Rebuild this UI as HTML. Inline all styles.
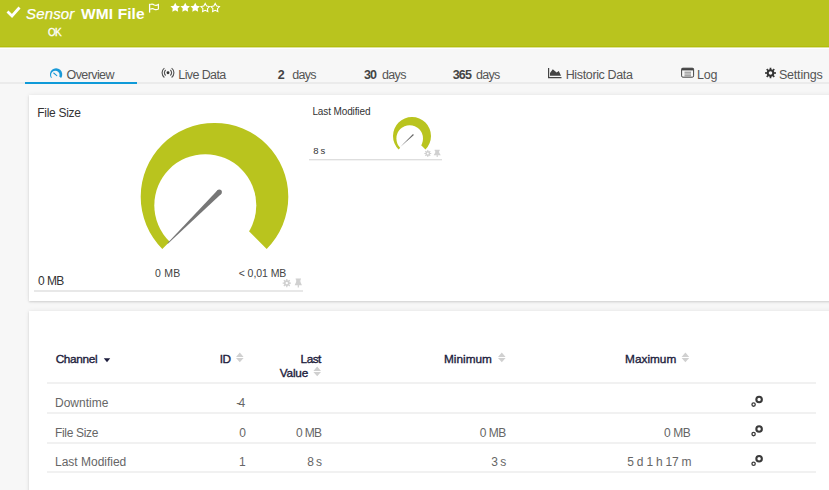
<!DOCTYPE html>
<html><head><meta charset="utf-8"><style>
html,body{margin:0;padding:0;width:829px;height:490px;overflow:hidden;background:#f7f7f7;position:relative}
.t{position:absolute;line-height:20px;font-family:"Liberation Sans",sans-serif;white-space:pre}
.a{position:absolute}
</style></head><body>
<!-- header -->
<div class="a" style="left:0;top:0;width:829px;height:46px;background:#b9c41e"></div>
<div class="a" style="left:0;top:46px;width:829px;height:1px;background:#b3bd0c"></div>
<div class="a" style="left:0;top:47px;width:829px;height:1px;background:#dde29c"></div>
<div class="a" style="left:0;top:48px;width:829px;height:1px;background:#fff"></div>
<svg class="a" style="left:0;top:0" width="829" height="48">
  <path d="M7.5 11.5 L12 16 L19.5 7.5" fill="none" stroke="#fff" stroke-width="2.8" stroke-linecap="butt"/>
  <!-- flag -->
  <path d="M149.6 3.8 V12.6" stroke="#fff" stroke-width="1.3" fill="none"/>
  <path d="M150.2 4.6 Q152.4 3.6 154.3 5 Q156.2 6 158.4 4.6 V9 Q156.2 10.3 154.3 9.2 Q152.4 8 150.2 9.2" stroke="#fff" stroke-width="1.15" fill="none"/>
  <!-- stars -->
  <g fill="#fff">
    <path d="M175.20 2.80 L176.70 5.74 L179.96 6.25 L177.63 8.59 L178.14 11.85 L175.20 10.35 L172.26 11.85 L172.77 8.59 L170.44 6.25 L173.70 5.74 Z"/>
    <path d="M185.20 2.80 L186.70 5.74 L189.96 6.25 L187.63 8.59 L188.14 11.85 L185.20 10.35 L182.26 11.85 L182.77 8.59 L180.44 6.25 L183.70 5.74 Z"/>
    <path d="M195.20 2.80 L196.70 5.74 L199.96 6.25 L197.63 8.59 L198.14 11.85 L195.20 10.35 L192.26 11.85 L192.77 8.59 L190.44 6.25 L193.70 5.74 Z"/>
  </g>
  <g fill="none" stroke="#fff" stroke-width="1.05" stroke-linejoin="miter">
    <path d="M205.20 3.40 L206.58 6.00 L209.48 6.51 L207.43 8.63 L207.85 11.54 L205.20 10.25 L202.55 11.54 L202.97 8.63 L200.92 6.51 L203.82 6.00 Z"/>
    <path d="M215.20 3.40 L216.58 6.00 L219.48 6.51 L217.43 8.63 L217.85 11.54 L215.20 10.25 L212.55 11.54 L212.97 8.63 L210.92 6.51 L213.82 6.00 Z"/>
  </g>
</svg>
<!-- tabs -->
<div class="a" style="left:0;top:82px;width:829px;height:2px;background:#ebebeb"></div>
<div class="a" style="left:25px;top:82px;width:112px;height:2px;background:#0f9ad8"></div>
<svg class="a" style="left:0;top:60px" width="829" height="25">
  <!-- overview gauge icon (y offset 60) -->
  <g transform="translate(0,-60)">
    <path d="M56.1 74.35 L51.06 77.88 A6.15 6.15 0 1 1 61.14 77.88 Z" fill="#1a9ad8"/>
    <circle cx="55.33" cy="75.06" r="4.25" fill="#f7f7f7"/>
    <path d="M53.7 73.0 L56.8 75.6" stroke="#1a9ad8" stroke-width="1.05" stroke-linecap="round"/>
    <!-- live data -->
    <circle cx="168" cy="72.8" r="1.45" fill="#333"/>
    <path d="M165.69 70.04 A3.6 3.6 0 0 0 165.69 75.56" fill="none" stroke="#555" stroke-width="1.15"/>
    <path d="M170.31 70.04 A3.6 3.6 0 0 1 170.31 75.56" fill="none" stroke="#555" stroke-width="1.15"/>
    <path d="M164.37 68.15 A5.9 5.9 0 0 0 164.37 77.45" fill="none" stroke="#555" stroke-width="1.15"/>
    <path d="M171.63 68.15 A5.9 5.9 0 0 1 171.63 77.45" fill="none" stroke="#555" stroke-width="1.15"/>
    <!-- historic -->
    <path d="M548.6 68 V77.6 H561.5" fill="none" stroke="#444" stroke-width="1.2"/>
    <path d="M550 75.8 L550 73 L552.8 69.2 L556.6 72.6 L558.8 71 L561 75.8 Z" fill="#444"/>
    <!-- log -->
    <rect x="681.6" y="68.2" width="12" height="9" rx="1.3" fill="none" stroke="#444" stroke-width="1"/>
    <rect x="681.6" y="68.2" width="12" height="2.2" fill="#444"/>
    <path d="M684.5 72.2 H691 M684.5 74 H691 M684.5 75.8 H691" stroke="#777" stroke-width="0.9"/>
    <!-- gear -->
    <path fill-rule="evenodd" fill="#333" d="M769.70 69.18 L769.61 67.67 L771.39 67.67 L771.30 69.18 L772.63 69.74 L773.64 68.61 L774.89 69.86 L773.76 70.87 L774.32 72.20 L775.83 72.11 L775.83 73.89 L774.32 73.80 L773.76 75.13 L774.89 76.14 L773.64 77.39 L772.63 76.26 L771.30 76.82 L771.39 78.33 L769.61 78.33 L769.70 76.82 L768.37 76.26 L767.36 77.39 L766.11 76.14 L767.24 75.13 L766.68 73.80 L765.17 73.89 L765.17 72.11 L766.68 72.20 L767.24 70.87 L766.11 69.86 L767.36 68.61 L768.37 69.74 Z M772.30 73.00 A1.8 1.8 0 1 0 768.70 73.00 A1.8 1.8 0 1 0 772.30 73.00 Z"/>
    </g>
</svg>
<!-- panels -->
<div class="a" style="left:29px;top:95px;width:820px;height:206px;background:#fff;box-shadow:0 0 5px rgba(0,0,0,0.07),0 1px 2px rgba(0,0,0,0.13)"></div>
<div class="a" style="left:29px;top:311px;width:820px;height:200px;background:#fff;box-shadow:0 0 5px rgba(0,0,0,0.07),0 1px 2px rgba(0,0,0,0.13)"></div>
<!-- panel 1 lines -->
<div class="a" style="left:34px;top:290px;width:269px;height:2px;background:#e8e8e8"></div>
<div class="a" style="left:309px;top:159px;width:133px;height:1px;background:#dedede"></div><div class="a" style="left:309px;top:160px;width:133px;height:1px;background:#f3f3f3"></div>
<svg class="a" style="left:0;top:0" width="829" height="300">
  <!-- big gauge -->
  <path d="M214.5 196.7 L162.32 248.88 A73.8 73.8 0 1 1 266.68 248.88 Z" fill="#b9c41e"/>
  <circle cx="205.3" cy="205.2" r="51" fill="#fff"/>
  <path d="M217.47 190.25 L167.35 243.15 L167.85 243.65 L221.13 193.95 Z" fill="#777"/>
  <circle cx="219.3" cy="192.1" r="2.6" fill="#777"/>
  <!-- small gauge -->
  <path d="M412 136 L398.56 149.44 A19 19 0 1 1 425.44 149.44 Z" fill="#b9c41e"/>
  <circle cx="409.7" cy="138.5" r="13.3" fill="#fff"/>
  <path d="M413.9 135 L400.2 147.1 L413 134 Z" fill="#666"/>
  <!-- small icons panel 1 -->
  <path fill-rule="evenodd" fill="#d0d0d0" d="M286.19 280.16 L286.11 278.96 L287.49 278.96 L287.41 280.16 L288.44 280.59 L289.24 279.68 L290.22 280.66 L289.31 281.46 L289.74 282.49 L290.94 282.41 L290.94 283.79 L289.74 283.71 L289.31 284.74 L290.22 285.54 L289.24 286.52 L288.44 285.61 L287.41 286.04 L287.49 287.24 L286.11 287.24 L286.19 286.04 L285.16 285.61 L284.36 286.52 L283.38 285.54 L284.29 284.74 L283.86 283.71 L282.66 283.79 L282.66 282.41 L283.86 282.49 L284.29 281.46 L283.38 280.66 L284.36 279.68 L285.16 280.59 Z M288.00 283.10 A1.2 1.2 0 1 0 285.60 283.10 A1.2 1.2 0 1 0 288.00 283.10 Z"/>
  <path d="M295.6 279 H301 M296.8 279 V282 L295.6 284.6 H301 L299.8 282 V279 M298.3 284.6 V287.6" fill="#d0d0d0" stroke="#d0d0d0" stroke-width="1.2"/>
  <path fill-rule="evenodd" fill="#d0d0d0" d="M427.29 151.05 L427.23 150.05 L428.37 150.05 L428.31 151.05 L429.17 151.41 L429.83 150.65 L430.65 151.47 L429.89 152.13 L430.25 152.99 L431.25 152.93 L431.25 154.07 L430.25 154.01 L429.89 154.87 L430.65 155.53 L429.83 156.35 L429.17 155.59 L428.31 155.95 L428.37 156.95 L427.23 156.95 L427.29 155.95 L426.43 155.59 L425.77 156.35 L424.95 155.53 L425.71 154.87 L425.35 154.01 L424.35 154.07 L424.35 152.93 L425.35 152.99 L425.71 152.13 L424.95 151.47 L425.77 150.65 L426.43 151.41 Z M428.80 153.50 A1.0 1.0 0 1 0 426.80 153.50 A1.0 1.0 0 1 0 428.80 153.50 Z"/>
  <path d="M434.6 150.3 H439.8 M435.8 150.3 V152.8 L434.6 154.8 H439.8 L438.6 152.8 V150.3 M437.2 154.8 V157" fill="#d0d0d0" stroke="#d0d0d0" stroke-width="1.1"/>
</svg>
<!-- table lines -->
<div class="a" style="left:47px;top:382px;width:769px;height:2px;background:#f1f1f1"></div>
<div class="a" style="left:47px;top:412px;width:769px;height:2px;background:#f1f1f1"></div>
<div class="a" style="left:47px;top:442px;width:769px;height:2px;background:#f1f1f1"></div>
<div class="a" style="left:47px;top:471px;width:769px;height:2px;background:#f1f1f1"></div>
<svg class="a" style="left:0;top:340px" width="829" height="150">
  <g transform="translate(0,-340)">
    <!-- caret -->
    <path d="M103.8 358.2 H110.2 L107 362.2 Z" fill="#1c1c3c"/>
    <!-- sort arrows -->
    <g id="so" fill="#d0d0d0">
      <path d="M236 357 L239.8 352.6 L243.6 357 Z"/>
      <path d="M236 358 L239.8 362.3 L243.6 358 Z"/>
    </g>
    <use href="#so" x="77.4" y="14"/>
    <use href="#so" x="262" y="0"/>
    <use href="#so" x="445.6" y="0"/>
    <!-- channel icons -->
    <g id="ci" fill="none" stroke="#3a3a3a">
      <circle cx="759.1" cy="399.5" r="2.75" stroke-width="2.1"/>
      <circle cx="753.6" cy="404.6" r="1.65" stroke-width="1.3"/>
    </g>
    <use href="#ci" y="29.5"/>
    <use href="#ci" y="59.2"/>
  </g>
</svg>

<div class="t" style="left:26.00px;top:4.00px;font-size:15px;font-weight:400;font-style:italic;letter-spacing:0.160px;color:#fff;-webkit-text-stroke:0.25px #fff">Sensor</div>
<div class="t" style="left:81.10px;top:3.83px;font-size:15.5px;font-weight:700;font-style:normal;letter-spacing:0.100px;color:#fff;">WMI File</div>
<div class="t" style="left:48.00px;top:22.73px;font-size:10px;font-weight:400;font-style:normal;letter-spacing:-0.700px;color:#fff;-webkit-text-stroke:0.3px #fff">OK</div>
<div class="t" style="left:66.60px;top:65.27px;font-size:12.5px;font-weight:400;font-style:normal;letter-spacing:-0.600px;color:#555;">Overview</div>
<div class="t" style="left:178.30px;top:65.27px;font-size:12.5px;font-weight:400;font-style:normal;letter-spacing:-0.613px;color:#555;">Live Data</div>
<div class="t" style="left:277.70px;top:65.27px;font-size:12.5px;font-weight:700;font-style:normal;letter-spacing:0.000px;color:#444;">2</div>
<div class="t" style="left:292.20px;top:65.27px;font-size:12.5px;font-weight:400;font-style:normal;letter-spacing:-0.733px;color:#555;">days</div>
<div class="t" style="left:364.10px;top:65.27px;font-size:12.5px;font-weight:700;font-style:normal;letter-spacing:-1.000px;color:#444;">30</div>
<div class="t" style="left:382.10px;top:65.27px;font-size:12.5px;font-weight:400;font-style:normal;letter-spacing:-0.700px;color:#555;">days</div>
<div class="t" style="left:452.70px;top:65.27px;font-size:12.5px;font-weight:700;font-style:normal;letter-spacing:-0.850px;color:#444;">365</div>
<div class="t" style="left:475.90px;top:65.27px;font-size:12.5px;font-weight:400;font-style:normal;letter-spacing:-0.700px;color:#555;">days</div>
<div class="t" style="left:565.70px;top:65.27px;font-size:12.5px;font-weight:400;font-style:normal;letter-spacing:-0.358px;color:#555;">Historic Data</div>
<div class="t" style="left:697.00px;top:65.27px;font-size:12.5px;font-weight:400;font-style:normal;letter-spacing:-0.200px;color:#555;">Log</div>
<div class="t" style="left:779.00px;top:65.07px;font-size:12.5px;font-weight:400;font-style:normal;letter-spacing:-0.214px;color:#555;">Settings</div>
<div class="t" style="left:37.20px;top:103.34px;font-size:12px;font-weight:400;font-style:normal;letter-spacing:-0.275px;color:#333;">File Size</div>
<div class="t" style="left:38.10px;top:270.94px;font-size:12px;font-weight:400;font-style:normal;letter-spacing:-0.600px;color:#333;">0 MB</div>
<div class="t" style="left:155.00px;top:262.96px;font-size:10.5px;font-weight:400;font-style:normal;letter-spacing:0.233px;color:#444;">0 MB</div>
<div class="t" style="left:238.70px;top:262.56px;font-size:10.5px;font-weight:400;font-style:normal;letter-spacing:-0.062px;color:#444;">&lt; 0,01 MB</div>
<div class="t" style="left:312.40px;top:101.53px;font-size:10px;font-weight:400;font-style:normal;letter-spacing:-0.117px;color:#333;">Last Modified</div>
<div class="t" style="left:313.20px;top:140.91px;font-size:9.5px;font-weight:400;font-style:normal;letter-spacing:-0.250px;color:#333;">8 s</div>
<div class="t" style="left:55.70px;top:348.81px;font-size:11.8px;font-weight:400;font-style:normal;letter-spacing:-0.333px;color:#1c1c3c;-webkit-text-stroke:0.35px #1c1c3c">Channel</div>
<div class="t" style="left:219.70px;top:349.11px;font-size:11.8px;font-weight:400;font-style:normal;letter-spacing:-0.500px;color:#1c1c3c;-webkit-text-stroke:0.35px #1c1c3c">ID</div>
<div class="t" style="left:300.60px;top:349.11px;font-size:11.8px;font-weight:400;font-style:normal;letter-spacing:-0.500px;color:#1c1c3c;-webkit-text-stroke:0.35px #1c1c3c">Last</div>
<div class="t" style="left:279.80px;top:363.11px;font-size:11.8px;font-weight:400;font-style:normal;letter-spacing:-0.200px;color:#1c1c3c;-webkit-text-stroke:0.35px #1c1c3c">Value</div>
<div class="t" style="left:443.90px;top:348.81px;font-size:11.8px;font-weight:400;font-style:normal;letter-spacing:0.033px;color:#1c1c3c;-webkit-text-stroke:0.35px #1c1c3c">Minimum</div>
<div class="t" style="left:625.10px;top:348.81px;font-size:11.8px;font-weight:400;font-style:normal;letter-spacing:0.000px;color:#1c1c3c;-webkit-text-stroke:0.35px #1c1c3c">Maximum</div>
<div class="t" style="left:55.00px;top:392.54px;font-size:12px;font-weight:400;font-style:normal;letter-spacing:0.000px;color:#666;">Downtime</div>
<div class="t" style="left:55.00px;top:422.84px;font-size:12px;font-weight:400;font-style:normal;letter-spacing:-0.338px;color:#666;">File Size</div>
<div class="t" style="left:55.00px;top:451.84px;font-size:12px;font-weight:400;font-style:normal;letter-spacing:-0.008px;color:#666;">Last Modified</div>
<div class="t" style="left:236.20px;top:392.54px;font-size:12px;font-weight:400;font-style:normal;letter-spacing:-1.800px;color:#666;">-4</div>
<div class="t" style="left:239.30px;top:422.84px;font-size:12px;font-weight:400;font-style:normal;letter-spacing:0.000px;color:#666;">0</div>
<div class="t" style="left:238.90px;top:451.84px;font-size:12px;font-weight:400;font-style:normal;letter-spacing:0.000px;color:#666;">1</div>
<div class="t" style="left:295.90px;top:422.84px;font-size:12px;font-weight:400;font-style:normal;letter-spacing:-0.633px;color:#666;">0 MB</div>
<div class="t" style="left:307.30px;top:451.84px;font-size:12px;font-weight:400;font-style:normal;letter-spacing:-0.650px;color:#666;">8 s</div>
<div class="t" style="left:479.70px;top:422.84px;font-size:12px;font-weight:400;font-style:normal;letter-spacing:-0.467px;color:#666;">0 MB</div>
<div class="t" style="left:491.30px;top:451.84px;font-size:12px;font-weight:400;font-style:normal;letter-spacing:-0.500px;color:#666;">3 s</div>
<div class="t" style="left:664.10px;top:422.84px;font-size:12px;font-weight:400;font-style:normal;letter-spacing:-0.433px;color:#666;">0 MB</div>
<div class="t" style="left:627.30px;top:451.84px;font-size:12px;font-weight:400;font-style:normal;letter-spacing:-0.227px;color:#666;">5 d 1 h 17 m</div>
</body></html>
